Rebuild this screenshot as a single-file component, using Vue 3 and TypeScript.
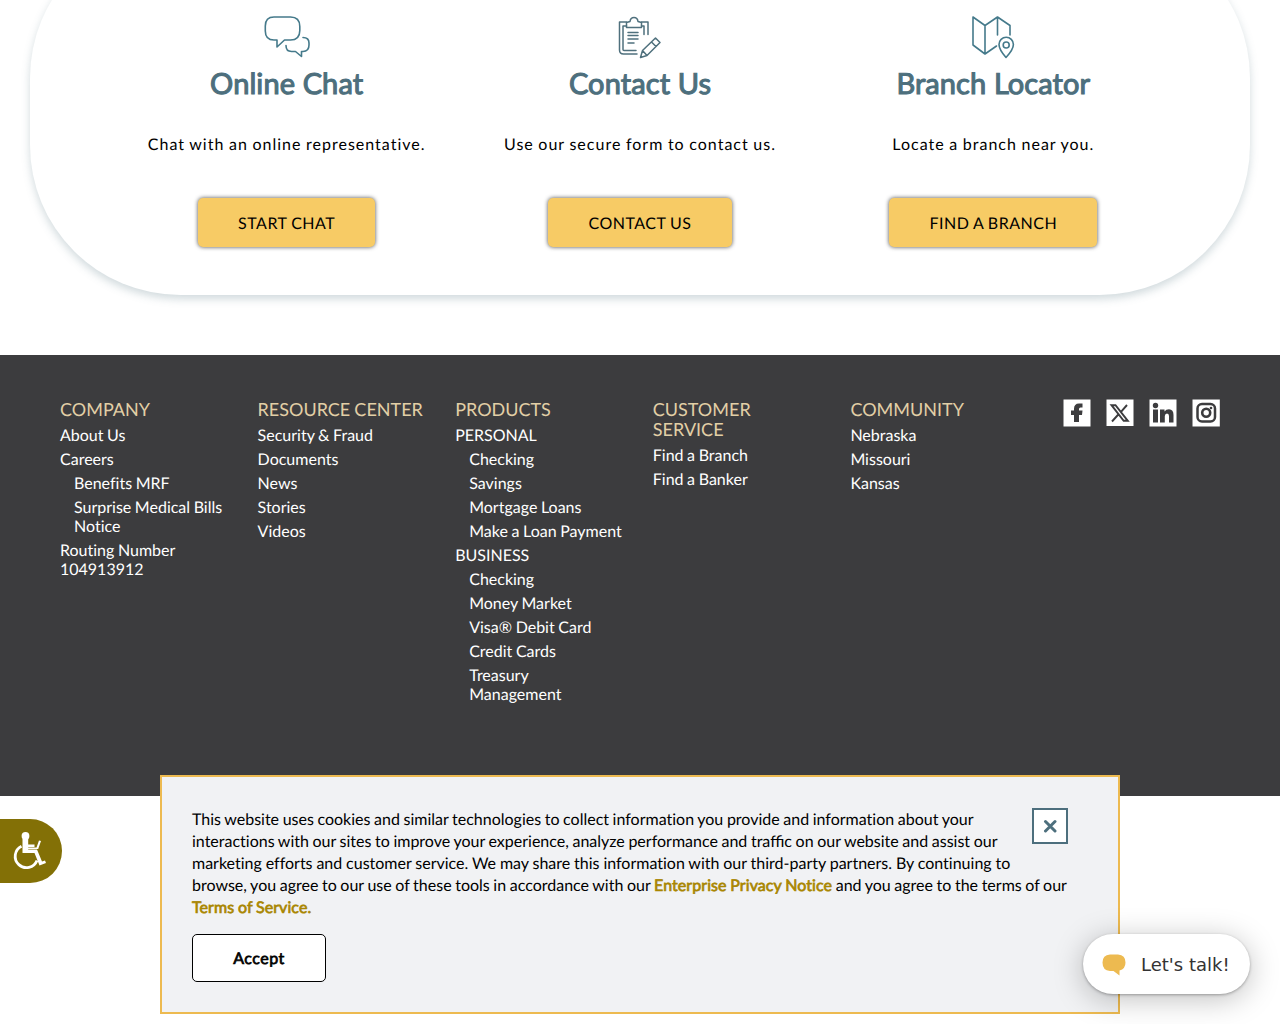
<script setup lang="ts">
interface Service {
  icon: 'chat' | 'form' | 'map'
  title: string
  text: string
  action: string
}
interface FooterLink {
  label: string
  nested?: boolean
}
interface FooterColumn {
  title: string
  links: FooterLink[]
}

const services: Service[] = [
  { icon: 'chat', title: 'Online Chat', text: 'Chat with an online representative.', action: 'START CHAT' },
  { icon: 'form', title: 'Contact Us', text: 'Use our secure form to contact us.', action: 'CONTACT US' },
  { icon: 'map', title: 'Branch Locator', text: 'Locate a branch near you.', action: 'FIND A BRANCH' },
]

const columns: FooterColumn[] = [
  {
    title: 'COMPANY',
    links: [
      { label: 'About Us' },
      { label: 'Careers' },
      { label: 'Benefits MRF', nested: true },
      { label: 'Surprise Medical Bills Notice', nested: true },
      { label: 'Routing Number 104913912' },
    ],
  },
  {
    title: 'RESOURCE CENTER',
    links: [{ label: 'Security & Fraud' }, { label: 'Documents' }, { label: 'News' }, { label: 'Stories' }, { label: 'Videos' }],
  },
  {
    title: 'PRODUCTS',
    links: [
      { label: 'PERSONAL' },
      { label: 'Checking', nested: true },
      { label: 'Savings', nested: true },
      { label: 'Mortgage Loans', nested: true },
      { label: 'Make a Loan Payment', nested: true },
      { label: 'BUSINESS' },
      { label: 'Checking', nested: true },
      { label: 'Money Market', nested: true },
      { label: 'Visa® Debit Card', nested: true },
      { label: 'Credit Cards', nested: true },
      { label: 'Treasury Management', nested: true },
    ],
  },
  { title: 'CUSTOMER SERVICE', links: [{ label: 'Find a Branch' }, { label: 'Find a Banker' }] },
  { title: 'COMMUNITY', links: [{ label: 'Nebraska' }, { label: 'Missouri' }, { label: 'Kansas' }] },
]
</script>

<template>
  <div class="page">
    <section class="services">
      <div class="card">
        <article v-for="s in services" :key="s.title" class="service">
          <svg v-if="s.icon === 'chat'" class="service-icon" viewBox="0 0 50 50">
            <path d="M12 4H28.500Q37.800 4 37.800 13.500V17.500Q37.800 27 28.500 27H22.500L15 34V27H12Q3.300 27 3.300 18V13Q3.300 4 12 4Z" />
            <path d="M41 24.500Q47 24.500 47 30V32Q47 38.500 41 38.500H39.500V43.500L33.500 38.500H29.500Q24 38.500 24 32.500" />
          </svg>
          <svg v-else-if="s.icon === 'form'" class="service-icon thin" viewBox="0 0 50 50">
            <path d="M11.500 9H4.500V37Q4.500 41 8.500 41H22" />
            <path d="M11.500 13H8V36.500Q8 37.500 9 37.500H21M26.500 9H33V21.500M26.500 13H29V21.500" />
            <path d="M11.500 14.500V9.500L15 8.500Q15.500 4.500 19 4.500T23 8.500L26.500 9.500V14.500Z" />
            <path d="M13 19.500H23M13 22.500H23M13 26H23M13 30H19M25.500 44.500L27.500 37.500L40.500 25L45 29.500L32 42.500ZM36.500 29L41 33.500M27.500 37.500L32 42.500" />
          </svg>
          <svg v-else class="service-icon" viewBox="0 0 50 50">
            <path d="M5 4V32L17 41L28.500 33M5 4L17 12.500L29.500 4L42 12.500V22M17 12.500V41M29.500 4V22" />
            <path d="M38 44.500Q31 36.500 31 31.500A7.200 7.200 0 0 1 45.400 31.500Q45.400 36.500 38 44.500Z" />
            <circle cx="38.200" cy="32" r="3" />
          </svg>
          <h2>{{ s.title }}</h2>
          <p>{{ s.text }}</p>
          <a class="cta">{{ s.action }}</a>
        </article>
      </div>
    </section>

    <footer class="footer">
      <nav v-for="c in columns" :key="c.title" class="column">
        <h3>{{ c.title }}</h3>
        <ul>
          <li v-for="(l, i) in c.links" :key="i" :class="{ nested: l.nested }">{{ l.label }}</li>
        </ul>
      </nav>
      <div class="social">
        <svg viewBox="0 0 28 28">
          <path fill="#fff" d="M.5.5H27.500V27.500H.5Z" />
          <path fill="#3c3c3e" d="M11 23V16H8V11.500H11V10Q11 4.500 16 4.500H19.500V8.500H17.500Q16 8.500 16 10V11.500H19.500L19 16H16V23Z" />
        </svg>
        <svg viewBox="0 0 28 28">
          <path fill="#fff" d="M.5.5H27.500V27H.5Z" />
          <path fill="none" stroke="#3c3c3e" stroke-width="1.900" d="M5.500 6.200H9.500L21.800 21.800H17.700ZM21 6L15 12.800M12.300 15.500L6 22.500" />
        </svg>
        <svg viewBox="0 0 28 28">
          <path fill="#fff" d="M.5.5H27.500V27.500H.5Z" />
          <circle cx="6.500" cy="6.500" r="2.700" fill="#3c3c3e" />
          <path fill="#3c3c3e" d="M4 10.500H9V23.500H4ZM11 10.500H15.500V12.500Q17 10.300 20 10.300Q24.500 10.500 24.500 16V23.500H20V17Q20 14.500 18 14.500T15.800 17V23.500H11Z" />
        </svg>
        <svg viewBox="0 0 28 28">
          <path fill="#fff" d="M.5.5H27.800V27.500H.5Z" />
          <rect x="5.500" y="5" width="17.500" height="17.500" rx="4.500" fill="none" stroke="#3c3c3e" stroke-width="2.500" />
          <circle cx="14.200" cy="13.800" r="4" fill="none" stroke="#3c3c3e" stroke-width="2.600" />
          <circle cx="19" cy="9" r="1.300" fill="#3c3c3e" />
        </svg>
      </div>
    </footer>

    <button class="access" aria-label="Accessibility">
      <svg viewBox="0 0 36 40">
        <circle cx="13.500" cy="5" r="3.900" />
        <path d="M10.500 8H16.200V13.500H22.500V16H16.200V18.500H25L30 30.500L33 29.500L34 32L27.500 34.500L22.500 22H10.500ZM16 16.500H24.500L27 9.500L29 10L26.200 18H16Z" />
        <path class="wheel" d="M9.500 15.200A11.300 11.300 0 1 0 25 29.500" />
      </svg>
    </button>

    <aside class="cookies">
      <button class="close" aria-label="Close">
        <svg viewBox="0 0 14 14"><path d="M2.500 2.500L12 12M12 2.500L2.500 12" /></svg>
      </button>
      <p>
        This website uses cookies and similar technologies to collect information you provide and information about your
        interactions with our sites to improve your experience, analyze performance and <span class="liga">traffic</span> on
        our website and assist our
        <span class="loose">marketing efforts and customer service. We may share this information with our third-party
        partners. By continuing to</span><br />
        browse, you agree to our use of these tools in accordance with our
        <a>Enterprise Privacy Notice</a> and you agree to the terms of our<br />
        <a>Terms of Service.</a>
      </p>
      <button class="accept">Accept</button>
    </aside>

    <button class="talk">
      <svg viewBox="0 0 24 22">
        <path d="M8 .5H16Q23.500 1 23.500 8.500Q23.500 15 17.500 16.500V21.500L11.500 17H8Q.5 16.500.5 8.500Q.5 1 8 .5Z" />
      </svg>
      <span>Let's talk!</span>
    </button>
  </div>
</template>

<style>
body {
  background: #fff;
  overflow: hidden;
}
</style>

<style scoped>
.page {
  position: relative;
  height: 1024px;
  overflow: hidden;
  font-family: Lato, sans-serif;
  font-size: 16px;
  text-rendering: geometricPrecision;
  font-variant-ligatures: none;
  word-spacing: -0.5px;
  color: #000;
}
.page *,
.page {
  box-sizing: border-box;
}
button {
  font-family: inherit;
  text-rendering: inherit;
  padding: 0;
}
.liga {
  font-variant-ligatures: normal;
}
.loose {
  word-spacing: -0.25px;
}
.services {
  height: 355px;
  padding: 0 30px;
  overflow: hidden;
}
.card {
  display: flex;
  height: 367px;
  margin-top: -72px;
  padding: 85px 80px 0;
  border-radius: 150px;
  box-shadow: 0 4px 8px rgba(79, 112, 125, 0.26);
}
.service {
  flex: 1;
  display: flex;
  flex-direction: column;
  align-items: center;
}
.service-icon {
  width: 50px;
  height: 50px;
  fill: none;
  stroke: #457a8b;
  stroke-width: 1.600;
  stroke-linejoin: round;
  stroke-linecap: round;
}
.service-icon.thin {
  stroke: #4f707d;
  stroke-width: 1.5;
}
h2 {
  margin: 3px 0 0;
  font-size: 29px;
  line-height: 35px;
  font-weight: 400;
  letter-spacing: 0.1px;
  word-spacing: 0;
  color: #4d6f7d;
  -webkit-text-stroke: 1.1px #4d6f7d;
}
.service p {
  margin: 34px 0 0;
  line-height: 20px;
  letter-spacing: 1px;
}
.cta {
  height: 49px;
  margin-top: 43px;
  padding: 0 40px;
  border-radius: 5px;
  background: #f7cb65;
  box-shadow: 0 0 4px rgba(0, 0, 0, 0.7);
  line-height: 52px;
  letter-spacing: 0.5px;
}
.footer {
  display: flex;
  height: 441px;
  padding: 44px 60px 0;
  background: #3c3c3e;
  color: #fff;
}
.column {
  width: 197.600px;
  flex: none;
  padding-right: 30px;
}
h3 {
  margin: 0 0 7px;
  font-size: 18px;
  line-height: 20px;
  font-weight: 400;
  color: #e2cfa6;
}
ul {
  margin: 0;
  padding: 0;
  list-style: none;
}
li {
  margin-bottom: 5px;
  line-height: 19px;
}
li.nested {
  padding-left: 14px;
}
.social {
  display: flex;
  gap: 15px;
  margin-left: auto;
}
.social svg {
  width: 28px;
  height: 28px;
}
.access {
  position: absolute;
  left: 0;
  top: 819px;
  width: 62px;
  height: 64px;
  padding: 0 0 0 12px;
  border: 0;
  border-radius: 0 32px 32px 0;
  background: #837006;
}
.access svg {
  display: block;
  width: 36px;
  height: 40px;
  fill: #fff;
}
.access .wheel {
  fill: none;
  stroke: #fff;
  stroke-width: 2.800;
}
.cookies {
  position: absolute;
  left: 160px;
  top: 775px;
  width: 960px;
  height: 239px;
  padding: 31px 50px 0 30px;
  border: 2px solid #edba50;
  background: #f1f2f4;
}
.cookies p {
  margin: 0;
  padding-top: 1px;
  line-height: 22px;
}
.cookies a {
  color: #a98600;
  letter-spacing: 0.080px;
  -webkit-text-stroke: 0.700px #a98600;
}
.close {
  float: right;
  display: grid;
  place-items: center;
  width: 36px;
  height: 36px;
  border: 2px solid #4d6f7d;
  background: #fff;
}
.close svg {
  width: 14px;
  height: 14px;
  fill: none;
  stroke: #4d6f7d;
  stroke-width: 3;
  stroke-linecap: round;
}
.accept {
  display: block;
  width: 134px;
  height: 48px;
  margin-top: 15px;
  border: 1px solid #000;
  border-radius: 5px;
  background: #fff;
  color: #000;
  font-size: 16px;
  letter-spacing: 0.5px;
  -webkit-text-stroke: 0.700px #000;
}
.talk {
  position: absolute;
  left: 1083px;
  top: 934px;
  width: 167px;
  height: 60px;
  display: flex;
  align-items: center;
  gap: 15.500px;
  padding: 1px 0 0 18.500px;
  border: 0;
  border-radius: 30px;
  background: #fff;
  box-shadow: 0 1px 3px rgba(0, 0, 0, 0.3), 0 5px 30px rgba(0, 0, 0, 0.25);
  color: #333;
  font: 18px/22px 'DejaVu Sans', sans-serif;
  text-rendering: auto;
}
.talk svg {
  width: 24px;
  height: 22px;
  fill: #edba50;
}
</style>
